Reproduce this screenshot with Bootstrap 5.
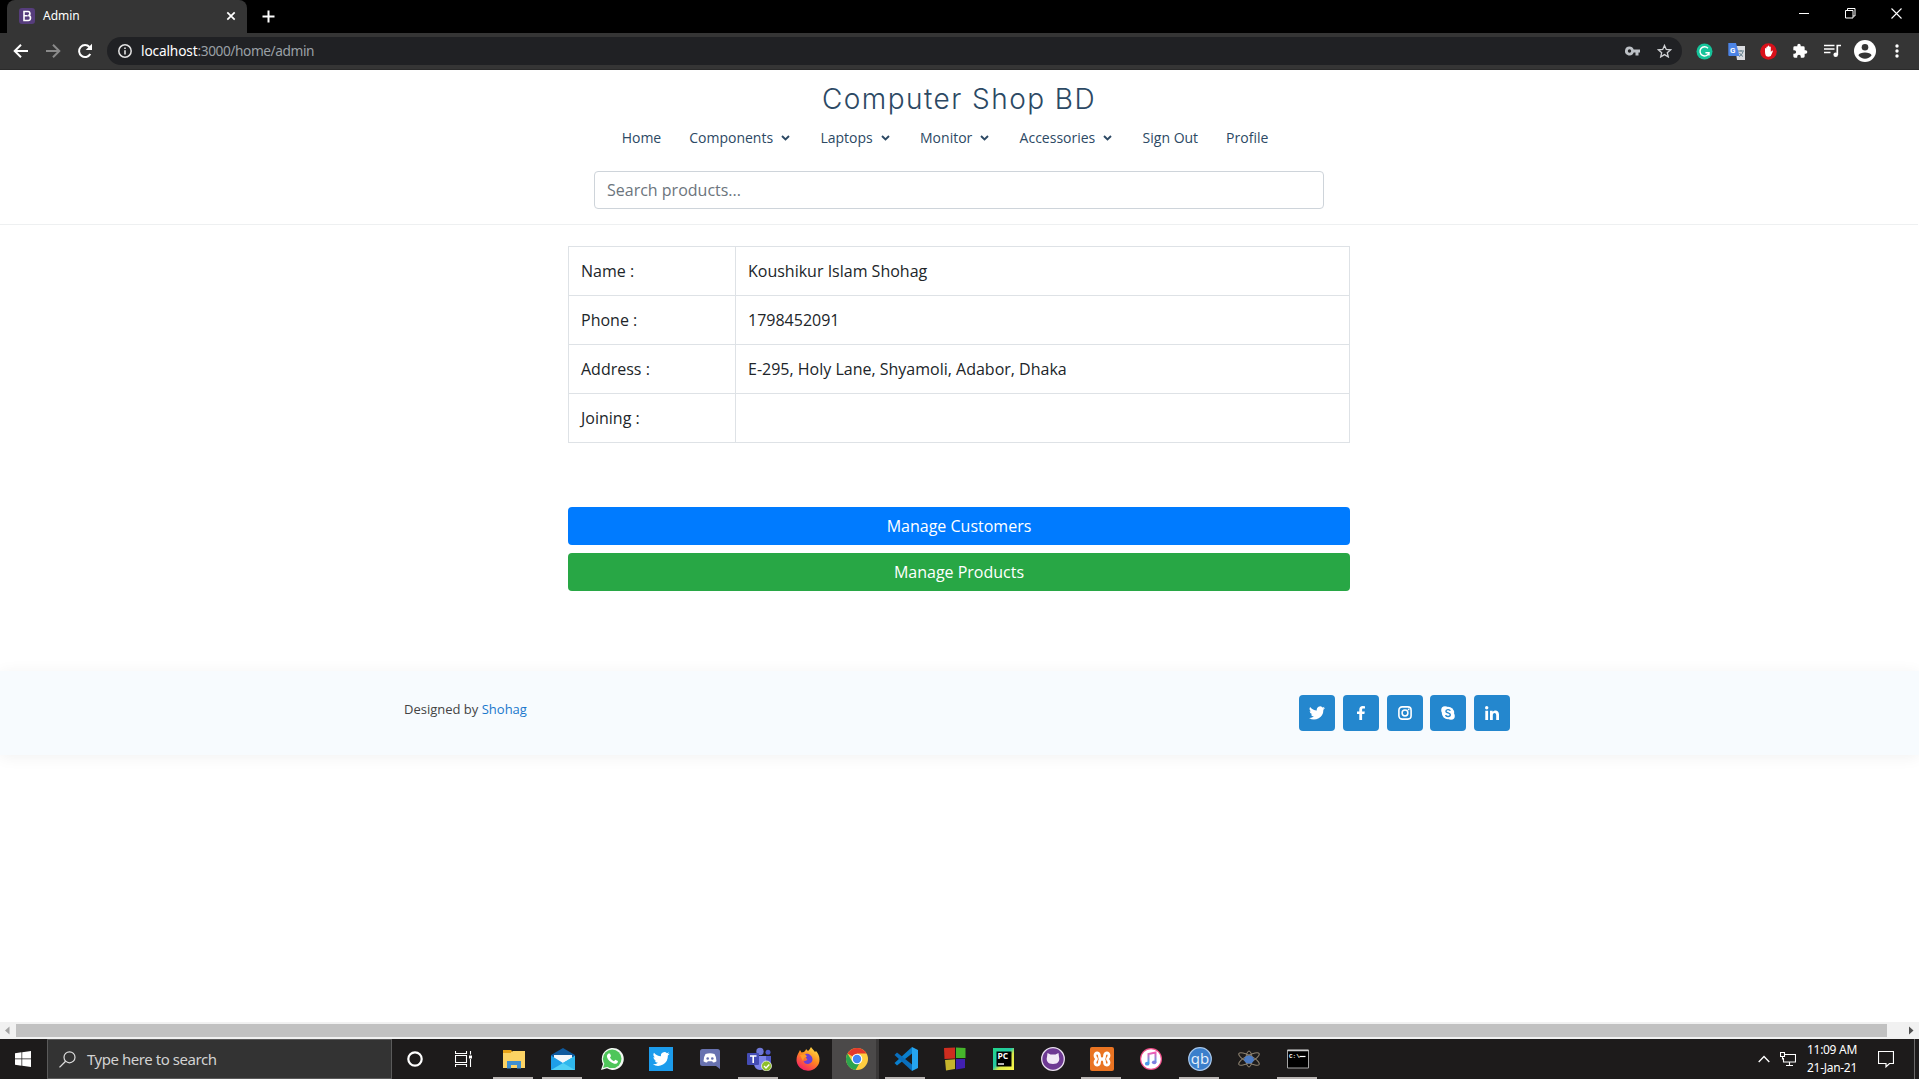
<!DOCTYPE html>
<html lang="en">
<head>
<meta charset="utf-8">
<title>Admin</title>
<link href="https://cdn.jsdelivr.net/npm/bootstrap@5.3.0/dist/css/bootstrap.min.css" rel="stylesheet">
<style>
html,body{height:100%}
body{font-family:"Open Sans","Noto Sans",sans-serif;color:#212529;background:#fff;overflow:hidden}
svg{display:block;flex:none}
.ui{font-family:"Noto Sans","Open Sans",sans-serif}
.tabstrip{height:33px;background:#000;padding-left:7px}
.tab-active{width:240px;height:33px;background:#353535;border-radius:8px 8px 0 0;padding:0 10px 2px 12px;color:#fff;font-size:12px}
.win-ctl{width:46px;height:26px}
.toolbar{height:37px;background:#353535;padding-left:12px;border-bottom:1px solid #2b2b2b}
.omni{height:28px;width:1576px;background:#202124;border-radius:14px;margin-left:14px;padding:0 9px 0 11px;font-size:13.7px;letter-spacing:-.15px;color:#fff}
.omni .rest{color:#9aa0a6;letter-spacing:-.42px}
.exts{width:237px;padding-left:14px}
.site-header{height:155px;border-bottom:1px solid #eef0f1;padding-top:11px}
.brand{font-family:Inter,sans-serif;font-weight:300;font-size:28px;line-height:36px;letter-spacing:1.45px;color:#2c4964;margin:0}
.mainnav{font-size:14px;line-height:21px;color:#2c4964;gap:28px;margin:10px 0 23px;padding-right:28px}
.mainnav a{color:inherit;text-decoration:none}
.chev{margin:0 2.300px 0 8px}
.searchbox{width:730px;height:38px;border-radius:4px;border-color:#ced4da}
.searchbox::placeholder{color:#6c757d}
.content-col{width:782px}
.info{margin-top:21px;border-color:#dee2e6}
.info td{padding:12px;height:49px;line-height:24px;color:#212529}
.info td:first-child{width:167px}
.mbtn{height:38px;border-radius:4px;color:#fff;line-height:24px}
.mbtn:hover{color:#fff}
.b-blue{background:#007bff}.b-green{background:#28a745}
.page{padding-right:1px}
.site-footer{height:84px;margin:80px -1px 0 0;background:#f7fbfe;box-shadow:0 2px 15px rgba(0,0,0,.06);font-size:13px;color:#444}
.foot-in{width:1111px;padding-top:24px}
.site-footer a{color:#1977cc;text-decoration:none}
.soc{width:36px;height:36px;border-radius:4px;background:#2487ce}
.hscroll{height:17px;background:#f1f1f1}
.thumb{height:13px;background:#c1c1c1}
.taskbar{height:40px;background:#1d1b1b;color:#fff}
.tsearch{width:345px;height:40px;background:#333;border:1px solid #5a5a5a;font-size:15px;color:#d2d2d2;padding-left:11px}
.ti{width:49px;height:40px}
.ti.on::after{content:"";position:absolute;left:4px;bottom:0;width:40px;height:2px;background:#b9b5b3}
.ti.cur{background:linear-gradient(90deg,#4b4949 0 44px,#3a3838 44px 47px,transparent 47px)}
.clock{font-size:12px;line-height:18px;width:60px;letter-spacing:-.3px}
</style>
</head>
<body class="d-flex flex-column">
<div class="ui">
  <div class="tabstrip d-flex align-items-center">
    <div class="tab-active d-flex align-items-center">
      <svg width="16" height="16" viewBox="0 0 16 16"><rect width="16" height="16" rx="3" fill="#563d7c"/><path d="M5 3.5h3.6a2 2 0 0 1 .6 4 2.4 2.4 0 0 1-.4 5H5zM5.2 7.8h3.5" fill="none" stroke="#fff" stroke-width="1.6"/></svg>
      <span class="ms-2 flex-grow-1">Admin</span>
      <svg width="12" height="12" viewBox="0 0 12 12"><path d="M2.300 2.300l7.400 7.400M9.700 2.300l-7.400 7.400" stroke="#fff" stroke-width="1.700"/></svg>
    </div>
    <svg style="margin-left:15px" width="13" height="13" viewBox="0 0 13 13"><path d="M6.500 .5v12M.5 6.500h12" stroke="#fff" stroke-width="2"/></svg>
    <div class="ms-auto d-flex align-items-center align-self-start">
      <div class="win-ctl d-flex align-items-center justify-content-center"><svg width="10" height="10"><path d="M0 5.500h10" stroke="#fff"/></svg></div>
      <div class="win-ctl d-flex align-items-center justify-content-center"><svg width="11" height="11"><path d="M.5 2.500h7.500v7.500H.5zM2.500 2.500V.5h7.500V8H8" fill="none" stroke="#fff"/></svg></div>
      <div class="win-ctl d-flex align-items-center justify-content-center"><svg width="11" height="11"><path d="M.5.5l10 10M10.500.5l-10 10" stroke="#fff" stroke-width="1.100"/></svg></div>
    </div>
  </div>
  <div class="toolbar d-flex align-items-center">
    <svg width="18" height="16" viewBox="0 0 18 16"><path d="M16 8H3M9 1.700L2.700 8 9 14.300" fill="none" stroke="#fff" stroke-width="2"/></svg>
    <svg style="margin-left:15px" width="18" height="16" viewBox="0 0 18 16"><path d="M1 8h13M8 1.700L14.300 8 8 14.300" fill="none" stroke="#8a8a8a" stroke-width="2"/></svg>
    <svg style="margin-left:14px" width="16" height="16" viewBox="0 0 16 16"><path d="M13.300 11A6 6 0 1 1 12.500 4" fill="none" stroke="#fff" stroke-width="2"/><path d="M15 .8v6.300H8.700z" fill="#fff"/></svg>
    <div class="omni d-flex align-items-center">
      <svg width="14" height="14" viewBox="0 0 14 14"><circle cx="7" cy="7" r="6.200" fill="none" stroke="#e3e3e3" stroke-width="1.500"/><path d="M7 6.200v4.300M7 3.400v1.600" stroke="#e3e3e3" stroke-width="1.600"/></svg>
      <span style="margin-left:9px">localhost<span class="rest">:3000/home/admin</span></span>
      <svg class="ms-auto" width="15" height="10" viewBox="0 0 15 10"><path fill="#bdc1c6" fill-rule="evenodd" d="M4.500.5a4.500 4.500 0 0 1 4.200 3H15v3h-1.500v3h-3v-3H8.700a4.500 4.500 0 1 1-4.200-6zM4.500 3.300a1.700 1.700 0 1 0 0 3.400 1.700 1.700 0 0 0 0-3.400z"/></svg>
      <svg style="margin:0 1px 0 17px" width="15" height="14" viewBox="0 0 15 14"><path d="M7.500 1.400l1.800 4 4.300.4-3.300 2.900 1 4.200-3.800-2.300-3.800 2.300 1-4.200L1.400 5.800l4.300-.4z" fill="none" stroke="#d0d2d5" stroke-width="1.300"/></svg>
    </div>
    <div class="exts d-flex align-items-center">
      <svg width="17" height="17" viewBox="0 0 17 17"><circle cx="8.500" cy="8.500" r="8" fill="#15c39a"/><path d="M12 5.200a4.600 4.600 0 1 0 1 4.500H9.400M13 9.500v3" fill="none" stroke="#fff" stroke-width="1.400"/></svg>
      <svg style="margin-left:15px" width="17" height="17" viewBox="0 0 17 17"><path d="M7 3h10v14H9z" fill="#dadce0"/><path d="M10 8h6M13 7v1.500M15 8.500c-.6 2.500-2 4-4 5M11.500 10c1 1.500 2 2.500 3.500 3.500" stroke="#607d8b" fill="none"/><path d="M.3 0H8l3.500 13H1.300a1 1 0 0 1-1-1z" fill="#4c84e6"/><text x="2" y="9.500" font-size="8" font-weight="700" fill="#fff" font-family="Roboto">G</text></svg>
      <svg style="margin-left:15px" width="17" height="17" viewBox="0 0 17 17"><circle cx="8.500" cy="8.500" r="8.300" fill="#d8101a"/><path d="M5 9V5.500q.7-1 1.400 0V4q.7-1 1.400 0V3q.7-1 1.500 0v1q.8-1 1.500 0v5l1.300-1.500q1.200 0 .6 1.200L10.800 13q-2.500 1.400-4.800 0Q5 11.500 5 9z" fill="#fff"/></svg>
      <svg style="margin-left:15px" width="16" height="16" viewBox="0 0 24 24"><path fill="#fff" d="M20.500 11H19V7a2 2 0 0 0-2-2h-4V3.500a2.500 2.500 0 0 0-5 0V5H4a2 2 0 0 0-2 2v3.800h1.500a2.700 2.700 0 0 1 0 5.400H2V20a2 2 0 0 0 2 2h3.800v-1.500a2.700 2.700 0 0 1 5.400 0V22H17a2 2 0 0 0 2-2v-4h1.500a2.500 2.500 0 0 0 0-5z"/></svg>
      <svg style="margin-left:16px" width="17" height="14" viewBox="0 0 17 14"><path d="M0 1.500h10.500M0 5h10.500M0 8.500h6.500M13.300 11V1.500H17" fill="none" stroke="#fff" stroke-width="1.700"/><circle cx="11.700" cy="10.700" r="2.300" fill="#fff"/></svg>
      <svg style="margin-left:13px" width="22" height="22" viewBox="0 0 22 22"><circle cx="11" cy="11" r="11" fill="#fff"/><circle cx="11" cy="7.300" r="3.300" fill="#353535"/><path d="M4.400 15.300c1.200-3.800 12-3.800 13.200 0a8 8 0 0 1-13.200 0z" fill="#353535"/></svg>
      <svg style="margin-left:19px" width="4" height="14"><circle cx="2" cy="2" r="1.700" fill="#fff"/><circle cx="2" cy="7" r="1.700" fill="#fff"/><circle cx="2" cy="12" r="1.700" fill="#fff"/></svg>
    </div>
  </div>
</div>

<main class="page flex-grow-1 overflow-hidden">
  <header class="site-header d-flex flex-column align-items-center">
    <h1 class="brand">Computer Shop BD</h1>
    <nav class="mainnav d-flex">
      <a href="#">Home</a>
      <a href="#" class="d-flex align-items-center">Components<svg class="chev" width="9" height="6" viewBox="0 0 9 6"><path d="M1 1l3.500 3.500L8 1" fill="none" stroke="#2c4964" stroke-width="1.900"/></svg></a>
      <a href="#" class="d-flex align-items-center">Laptops<svg class="chev" width="9" height="6" viewBox="0 0 9 6"><path d="M1 1l3.500 3.500L8 1" fill="none" stroke="#2c4964" stroke-width="1.900"/></svg></a>
      <a href="#" class="d-flex align-items-center">Monitor<svg class="chev" width="9" height="6" viewBox="0 0 9 6"><path d="M1 1l3.500 3.500L8 1" fill="none" stroke="#2c4964" stroke-width="1.900"/></svg></a>
      <a href="#" class="d-flex align-items-center">Accessories<svg class="chev" width="9" height="6" viewBox="0 0 9 6"><path d="M1 1l3.500 3.500L8 1" fill="none" stroke="#2c4964" stroke-width="1.900"/></svg></a>
      <a href="#">Sign Out</a>
      <a href="#">Profile</a>
    </nav>
    <input class="form-control searchbox" type="text" placeholder="Search products...">
  </header>
  <div class="content-col mx-auto">
    <table class="table table-bordered info mb-0">
      <tbody>
        <tr><td>Name :</td><td>Koushikur Islam Shohag</td></tr>
        <tr><td>Phone :</td><td>1798452091</td></tr>
        <tr><td>Address :</td><td>E-295, Holy Lane, Shyamoli, Adabor, Dhaka</td></tr>
        <tr><td>Joining :</td><td></td></tr>
      </tbody>
    </table>
    <div class="d-grid gap-2" style="margin-top:64px">
      <a href="#" class="btn mbtn b-blue">Manage Customers</a>
      <a href="#" class="btn mbtn b-green">Manage Products</a>
    </div>
  </div>
  <footer class="site-footer">
    <div class="foot-in mx-auto d-flex justify-content-between">
      <div style="padding-top:5px">Designed by <a href="#">Shohag</a></div>
      <div class="d-flex" style="gap:7.700px;padding-right:5px">
        <a class="soc d-flex align-items-center justify-content-center" href="#"><svg width="16" height="14" viewBox="0 0 24 20"><path fill="#fff" d="M24 2.400a10 10 0 0 1-2.800.8A5 5 0 0 0 23.300.5a10 10 0 0 1-3.100 1.200 4.900 4.900 0 0 0-8.400 4.500A14 14 0 0 1 1.700 1a4.900 4.900 0 0 0 1.500 6.600 4.900 4.900 0 0 1-2.200-.6 4.900 4.900 0 0 0 3.900 4.900 5 5 0 0 1-2.200.1 4.900 4.900 0 0 0 4.600 3.400A9.900 9.900 0 0 1 0 17.500 14 14 0 0 0 21.500 5a10 10 0 0 0 2.500-2.600z"/></svg></a>
        <a class="soc d-flex align-items-center justify-content-center" href="#"><svg width="8" height="14" viewBox="0 0 8 14"><path fill="#fff" d="M2.300 14V8H0V5.400h2.300V3.500C2.300 1.200 3.600 0 5.700 0L8 .2v2.300H6.500C5.300 2.500 5.100 3 5.100 3.800v1.600h2.700L7.400 8H5.100v6z"/></svg></a>
        <a class="soc d-flex align-items-center justify-content-center" href="#"><svg width="14" height="14" viewBox="0 0 14 14"><rect x=".9" y=".9" width="12.200" height="12.200" rx="3.300" fill="none" stroke="#fff" stroke-width="1.600"/><circle cx="7" cy="7" r="2.900" fill="none" stroke="#fff" stroke-width="1.500"/><circle cx="10.600" cy="3.400" r=".9" fill="#fff"/></svg></a>
        <a class="soc d-flex align-items-center justify-content-center" href="#"><svg width="14" height="14" viewBox="0 0 14 14"><circle cx="7" cy="7" r="6.200" fill="#fff"/><circle cx="4" cy="4" r="3.800" fill="#fff"/><circle cx="10" cy="10" r="3.800" fill="#fff"/><path d="M9.300 4.900C8.700 3 4.900 3.200 4.900 5.200c0 2.200 4.400 1.300 4.400 3.600 0 2-4.100 2.300-4.700.2" fill="none" stroke="#2487ce" stroke-width="1.400"/></svg></a>
        <a class="soc d-flex align-items-center justify-content-center" href="#"><svg width="14" height="14" viewBox="0 0 14 14"><circle cx="1.700" cy="1.700" r="1.700" fill="#fff"/><path fill="#fff" d="M.3 4.700h2.800V14H.3zM5 4.700h2.700V6c1.300-2.300 6.300-2.300 6.300 2.400V14h-2.800V9.200c0-3-3.400-2.800-3.400 0V14H5z"/></svg></a>
      </div>
    </div>
  </footer>
</main>

<div class="hscroll d-flex align-items-center">
  <svg width="16" height="17"><path d="M9.500 4.500v8l-4.500-4z" fill="#a3a3a3"/></svg>
  <div class="thumb flex-grow-1"></div>
  <svg width="32" height="17"><path d="M22 4.500v8l4.500-4z" fill="#505050"/></svg>
</div>

<div class="taskbar ui d-flex align-items-center">
  <div class="d-flex justify-content-center" style="width:47px;padding-right:1px"><svg width="16" height="16" viewBox="0 0 16 16"><path fill="#fff" d="M0 2.200L6.500 1.300V7.600H0zM7.200 1.200L16 0V7.600H7.200zM0 8.300H6.500V14.700L0 13.800zM7.200 8.300H16V16L7.200 14.800z"/></svg></div>
  <div class="tsearch d-flex align-items-center"><svg width="17" height="17" viewBox="0 0 17 17"><circle cx="10.500" cy="6.300" r="5.500" fill="none" stroke="#ddd" stroke-width="1.200"/><path d="M6.600 10.200L.5 16.400" stroke="#ddd" stroke-width="1.300"/></svg><span style="margin-left:11px;letter-spacing:-.45px">Type here to search</span></div>
  <div class="d-flex justify-content-center" style="width:46px"><svg width="16" height="16"><circle cx="8" cy="8" r="6.700" fill="none" stroke="#fff" stroke-width="2.200"/></svg></div>
  <div class="d-flex justify-content-center" style="width:50px"><svg width="17" height="16"><path d="M.5 0v2.500h11V0M.5 16v-2.500h11V16M.5 4.500h11v7H.5zM15.500 0v3.500M15.500 8v8" fill="none" stroke="#fff" stroke-width="1.100"/><path d="M14 4.500h3v3h-3z" fill="#fff"/></svg></div>

  <div class="ti on position-relative d-flex align-items-center justify-content-center" style="margin-left:1px"><svg width="24" height="24" viewBox="0 0 24 24"><path d="M1 3h8l2 2H1z" fill="#d99a1c"/><path d="M1 5h9l1-1h12v17H1z" fill="#fcd364"/><path d="M1 3h8v3H1z" fill="#e8a317"/><path d="M5 14h14v7.500h-4V18H9v3.500H5z" fill="#3f8fd0"/></svg></div>
  <div class="ti on position-relative d-flex align-items-center justify-content-center"><svg width="24" height="24" viewBox="0 0 24 24"><path d="M0 8L12 1l12 7v4H0z" fill="#0f5a9e"/><path d="M3 8h18v8H3z" fill="#f3f7fb"/><path d="M0 8.500L12 16 24 9v14H0z" fill="#1e9fe8"/><path d="M24 9L0 23h24z" fill="#50d0f5"/><path d="M12 16l12 7V9z" fill="#2fb7ec"/></svg></div>
  <div class="ti position-relative d-flex align-items-center justify-content-center"><svg width="24" height="24" viewBox="0 0 24 24"><path d="M1 23l2-6A11 11 0 1 1 7 21.300z" fill="#f2f7f2"/><circle cx="12.200" cy="11.800" r="9.300" fill="#4fc65a"/><path d="M3 21l1.600-5 4 3.500z" fill="#4fc65a"/><path d="M8.500 6.500l1.500 0 1 2.600-1 1.400c1 1.900 2.200 2.900 4 3.700l1.300-1.500 2.600 1.300c.3 2.300-2 3.200-3.700 2.700C10.500 15.500 7.800 13 7 10c-.2-1.500.3-2.800 1.500-3.500z" fill="#fff"/></svg></div>
  <div class="ti position-relative d-flex align-items-center justify-content-center"><svg width="24" height="24" viewBox="0 0 24 24"><path fill="#1c9cec" d="M0 0h24v24H0z"/><path transform="translate(3.800 5) scale(.7)" fill="#fff" d="M24 2.400a10 10 0 0 1-2.800.8A5 5 0 0 0 23.300.5a10 10 0 0 1-3.100 1.200 4.900 4.900 0 0 0-8.400 4.500A14 14 0 0 1 1.700 1a4.900 4.900 0 0 0 1.500 6.600 4.900 4.900 0 0 1-2.200-.6 4.900 4.900 0 0 0 3.900 4.900 5 5 0 0 1-2.200.1 4.900 4.900 0 0 0 4.600 3.400A9.900 9.900 0 0 1 0 17.500 14 14 0 0 0 21.500 5a10 10 0 0 0 2.500-2.600z"/></svg></div>
  <div class="ti position-relative d-flex align-items-center justify-content-center"><svg width="24" height="24" viewBox="0 0 24 24"><path d="M4.500 2h15a2.500 2.500 0 0 1 2.500 2.500V22l-4-3H4.500A2.500 2.500 0 0 1 2 16.500v-12A2.500 2.500 0 0 1 4.500 2z" fill="#6872b0"/><path fill="#fff" d="M7.500 7q4.500-1.500 9 0 2 3 2 7.200-1.500 1.300-3.500 1.300l-.8-1.200h-4.400L9 15.500q-2 0-3.500-1.300 0-4.200 2-7.200z"/><circle cx="9.700" cy="11.500" r="1.300" fill="#6872b0"/><circle cx="14.300" cy="11.500" r="1.300" fill="#6872b0"/></svg></div>
  <div class="ti on position-relative d-flex align-items-center justify-content-center"><svg width="26" height="24" viewBox="0 0 26 24"><circle cx="14" cy="4.500" r="3.700" fill="#6f78d8"/><circle cx="22" cy="5.300" r="2.500" fill="#5059c9"/><path d="M17 9h8v7a4 4 0 0 1-8 0z" fill="#5059c9"/><path d="M8 9h12v8a6 6 0 0 1-12 0z" fill="#7b83eb"/><rect x="1" y="6" width="12" height="12" rx="1" fill="#444cb4"/><path d="M4 9h6.500M7.200 9v7" stroke="#fff" stroke-width="1.600"/><circle cx="20.500" cy="19" r="5" fill="#8fbf2b" stroke="#fff" stroke-width=".7"/><path d="M18 19l2 2 3.300-3.500" fill="none" stroke="#fff" stroke-width="1.300"/></svg></div>
  <div class="ti position-relative d-flex align-items-center justify-content-center"><svg width="24" height="24" viewBox="0 0 24 24"><defs><linearGradient id="ff" x1=".8" y1="0" x2=".2" y2="1"><stop offset="0" stop-color="#ffe14a"/><stop offset=".45" stop-color="#ff8a1f"/><stop offset="1" stop-color="#f5156c"/></linearGradient></defs><path d="M15 0c1 2 3 3 4 5l1-1c2 2 3.500 5 3.500 8.500A11.500 11 0 0 1 .5 13C.5 9 2 7 3 5l1-2 1.500 2.500L8 5c1-1 2-2 2-3l2 2c1-1 2-2 3-4z" fill="url(#ff)"/><path d="M8 7.500c3-2 8 0 8.500 4.500a4.800 4.800 0 0 1-9 2.500l4-1.500z" fill="#6a3fd6"/><path d="M4 8l5-1 2 2.500-3 1.500-1 3z" fill="#ff9b28"/></svg></div>
  <div class="ti cur position-relative d-flex align-items-center justify-content-center"><svg width="24" height="24" viewBox="0 0 24 24"><circle cx="12" cy="12" r="11" fill="#ffcd40"/><path d="M12 12L2.500 6.500A11 11 0 0 1 21.500 6.500H12z" fill="#e3392b"/><path d="M2.500 6.500A11 11 0 0 0 10.500 23l4.800-8L12 12 7.200 14.600z" fill="#2da44e"/><circle cx="12" cy="12" r="5.300" fill="#fff"/><circle cx="12" cy="12" r="4.200" fill="#4285f4"/></svg></div>
  <div class="ti on position-relative d-flex align-items-center justify-content-center"><svg width="24" height="24" viewBox="0 0 24 24"><path d="M18 0l6 3v18l-6 3z" fill="#25a4ef"/><path d="M18 0v6.500L3 18.500.5 16z" fill="#0a7fcd"/><path d="M18 24v-6.500L3 5.500.5 8z" fill="#0a6fbd"/></svg></div>
  <div class="ti position-relative d-flex align-items-center justify-content-center"><svg width="24" height="24" viewBox="0 0 24 24"><path d="M1 1l11-.5v11L1.500 12z" fill="#cf2d1f"/><path d="M13 .5L22.500 1v10H13z" fill="#46b52b"/><path d="M2 13l10-.7V22L3 23.500z" fill="#c7b52c"/><path d="M13 12h9v9l-9 1.500z" fill="#4120b0"/></svg></div>
  <div class="ti position-relative d-flex align-items-center justify-content-center"><svg width="24" height="24" viewBox="0 0 24 24"><defs><linearGradient id="pc" x1="0" y1="0" x2="1" y2="1"><stop offset="0" stop-color="#21d789"/><stop offset=".45" stop-color="#25c9a5"/><stop offset=".6" stop-color="#d9e84a"/><stop offset="1" stop-color="#fcf84a"/></linearGradient></defs><path d="M1 1h21v22H1z" fill="url(#pc)"/><path d="M4.500 4.500h15v15h-15z" fill="#000"/><text x="5.500" y="12.300" font-size="8.500" font-weight="700" fill="#fff" font-family="Open Sans">PC</text><path d="M6 17h6" stroke="#fff" stroke-width="1.400"/></svg></div>
  <div class="ti position-relative d-flex align-items-center justify-content-center"><svg width="24" height="24" viewBox="0 0 24 24"><circle cx="12" cy="12" r="11.300" fill="#6e3a93" stroke="#e9e0ef" stroke-width="1.300"/><path d="M6.500 6l3 1.500h5l3-1.500.5 4c1 3.500-.5 7-6 7s-7-3.500-6-7z" fill="#f2eaf6"/></svg></div>
  <div class="ti on position-relative d-flex align-items-center justify-content-center"><svg width="24" height="24" viewBox="0 0 24 24"><rect width="24" height="24" rx="2" fill="#ea7422"/><path d="M9.500 9.500C9.500 5 5 5 5 8.500c0 2 1.500 2.500 1.500 3.500S5 13.500 5 15.500C5 19 9.500 19 9.500 15c0-2 1-3 2.500-3s2.500 1 2.500 3c0 4 4.500 4 4.500.5 0-2-1.500-2.500-1.500-3.500S19 10.500 19 8.500C19 5 14.500 5 14.500 9.500c0 1.500-1 2.500-2.500 2.500s-2.500-1-2.500-2.500z" fill="none" stroke="#fff" stroke-width="2.800"/></svg></div>
  <div class="ti position-relative d-flex align-items-center justify-content-center"><svg width="24" height="24" viewBox="0 0 24 24"><defs><linearGradient id="it" x1="0" y1="0" x2="0" y2="1"><stop offset="0" stop-color="#f45bb5"/><stop offset="1" stop-color="#38b6f1"/></linearGradient></defs><circle cx="12" cy="12" r="11" fill="#f04f8b"/><circle cx="12" cy="12" r="9.800" fill="#fff"/><path d="M9.500 16.500V7l7-1.500V15" fill="none" stroke="url(#it)" stroke-width="2"/><ellipse cx="8.200" cy="16.700" rx="2.300" ry="1.900" fill="#4a9bea"/><ellipse cx="15.200" cy="15.300" rx="2.300" ry="1.900" fill="#7f7fe0"/></svg></div>
  <div class="ti on position-relative d-flex align-items-center justify-content-center"><svg width="24" height="24" viewBox="0 0 24 24"><circle cx="12" cy="12" r="11.300" fill="#3b7fcb" stroke="#a8c8ec" stroke-width="1.200"/><text x="12" y="16.500" text-anchor="middle" font-size="15" fill="#e8f2fc" font-family="Open Sans">qb</text></svg></div>
  <div class="ti position-relative d-flex align-items-center justify-content-center"><svg width="24" height="24" viewBox="0 0 24 24"><g fill="none" stroke="#8d8270" stroke-width="1"><ellipse cx="12" cy="12" rx="11.500" ry="3.500" transform="rotate(28 12 12)"/><ellipse cx="12" cy="12" rx="11.500" ry="3.500" transform="rotate(-28 12 12)"/><ellipse cx="12" cy="12" rx="3" ry="8"/></g><ellipse cx="12" cy="12.500" rx="5" ry="4" fill="#4c7cc5"/></svg></div>
  <div class="ti on position-relative d-flex align-items-center justify-content-center"><svg width="24" height="24" viewBox="0 0 24 24"><path d="M1.500 3h21v18h-21z" fill="#000" stroke="#a5a5a5"/><path d="M1.500 3.500h21" stroke="#ccc" stroke-width="1.500"/><text x="3" y="10.500" font-size="6" font-weight="700" fill="#fff" font-family="Liberation Mono">C:\</text><path d="M13.500 9.500h6" stroke="#fff" stroke-width="1.200"/></svg></div>

  <svg class="ms-auto" width="12" height="8"><path d="M.7 7L6 1.500 11.300 7" fill="none" stroke="#fff" stroke-width="1.300"/></svg>
  <svg style="margin-left:10px" width="16" height="14"><path d="M5 2.500h10.500v7.500H3.500V6M9.500 10v3M6 13.500h7M.5.5h4v4h-4zM2.500 4.500v3" fill="none" stroke="#fff" stroke-width="1.100"/></svg>
  <div class="clock text-center" style="margin-left:6px">11:09 AM<br>21-Jan-21</div>
  <svg style="margin:0 20px 0 16px" width="16" height="17"><path d="M.5.500h15v12h-4L8 15.800 8 12.500H.5z" fill="none" stroke="#fff" stroke-width="1.200"/></svg>
  <div class="vr text-white" style="margin-right:4px;opacity:.35"></div>
</div>
<script src="https://cdn.jsdelivr.net/npm/bootstrap@5.3.0/dist/js/bootstrap.bundle.min.js"></script>
</body>
</html>
